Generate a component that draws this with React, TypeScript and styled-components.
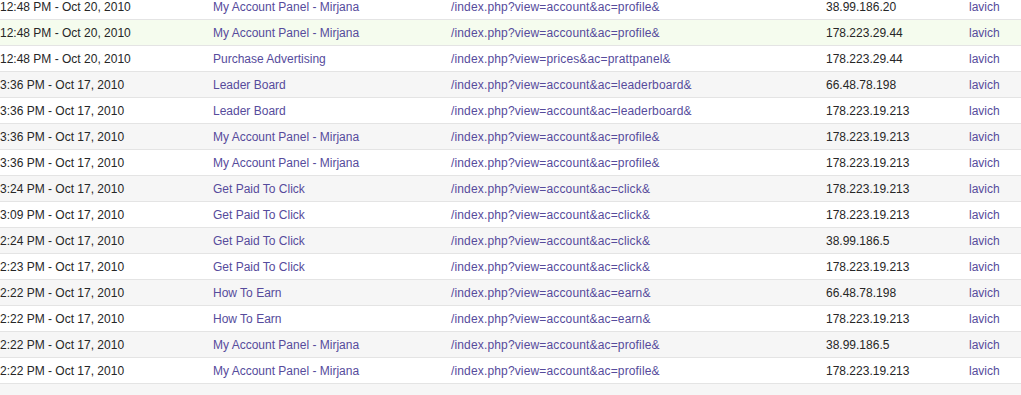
import React from 'react'
import styled, { createGlobalStyle } from 'styled-components'

const GlobalStyle = createGlobalStyle`
  html, body {
    margin: 0;
    padding: 0;
    background: #fff;
    overflow: hidden;
  }
`

const Page = styled.div`
  width: 1021px;
  height: 395px;
  overflow: hidden;
  font-family: "Liberation Sans", Arial, sans-serif;
  font-size: 12px;
`

const Table = styled.div`
  margin-top: -6px;
  display: flex;
  flex-direction: column;
`

const Row = styled.div<{ $tone: 'white' | 'grey' | 'hover' }>`
  display: grid;
  grid-template-columns: 213px 238px 375px 143px 1fr;
  align-items: center;
  height: 25px;
  border-bottom: 1px solid #e4e4e4;
  background: ${p => (p.$tone === 'grey' ? '#f6f6f6' : p.$tone === 'hover' ? '#f5fcee' : '#fff')};
`

const Cell = styled.div`
  white-space: nowrap;
  color: #262626;
`

const Link = styled.a`
  color: #564b9c;
  text-decoration: none;
  white-space: nowrap;
`

const Url = styled(Link)`
  letter-spacing: 0.15px;
`

const rows = [
  ['12:48 PM - Oct 20, 2010', 'My Account Panel - Mirjana', '/index.php?view=account&ac=profile&', '38.99.186.20'],
  ['12:48 PM - Oct 20, 2010', 'My Account Panel - Mirjana', '/index.php?view=account&ac=profile&', '178.223.29.44'],
  ['12:48 PM - Oct 20, 2010', 'Purchase Advertising', '/index.php?view=prices&ac=prattpanel&', '178.223.29.44'],
  ['3:36 PM - Oct 17, 2010', 'Leader Board', '/index.php?view=account&ac=leaderboard&', '66.48.78.198'],
  ['3:36 PM - Oct 17, 2010', 'Leader Board', '/index.php?view=account&ac=leaderboard&', '178.223.19.213'],
  ['3:36 PM - Oct 17, 2010', 'My Account Panel - Mirjana', '/index.php?view=account&ac=profile&', '178.223.19.213'],
  ['3:36 PM - Oct 17, 2010', 'My Account Panel - Mirjana', '/index.php?view=account&ac=profile&', '178.223.19.213'],
  ['3:24 PM - Oct 17, 2010', 'Get Paid To Click', '/index.php?view=account&ac=click&', '178.223.19.213'],
  ['3:09 PM - Oct 17, 2010', 'Get Paid To Click', '/index.php?view=account&ac=click&', '178.223.19.213'],
  ['2:24 PM - Oct 17, 2010', 'Get Paid To Click', '/index.php?view=account&ac=click&', '38.99.186.5'],
  ['2:23 PM - Oct 17, 2010', 'Get Paid To Click', '/index.php?view=account&ac=click&', '178.223.19.213'],
  ['2:22 PM - Oct 17, 2010', 'How To Earn', '/index.php?view=account&ac=earn&', '66.48.78.198'],
  ['2:22 PM - Oct 17, 2010', 'How To Earn', '/index.php?view=account&ac=earn&', '178.223.19.213'],
  ['2:22 PM - Oct 17, 2010', 'My Account Panel - Mirjana', '/index.php?view=account&ac=profile&', '38.99.186.5'],
  ['2:22 PM - Oct 17, 2010', 'My Account Panel - Mirjana', '/index.php?view=account&ac=profile&', '178.223.19.213'],
]

export default function App() {
  return (
    <Page>
      <GlobalStyle />
      <Table>
        {rows.map((r, i) => (
          <Row key={i} $tone={i === 1 ? 'hover' : i % 2 === 1 ? 'grey' : 'white'}>
            <Cell>{r[0]}</Cell>
            <Link href="#">{r[1]}</Link>
            <Url href="#">{r[2]}</Url>
            <Cell>{r[3]}</Cell>
            <Link href="#">lavich</Link>
          </Row>
        ))}
        <Row $tone="grey" />
      </Table>
    </Page>
  )
}
